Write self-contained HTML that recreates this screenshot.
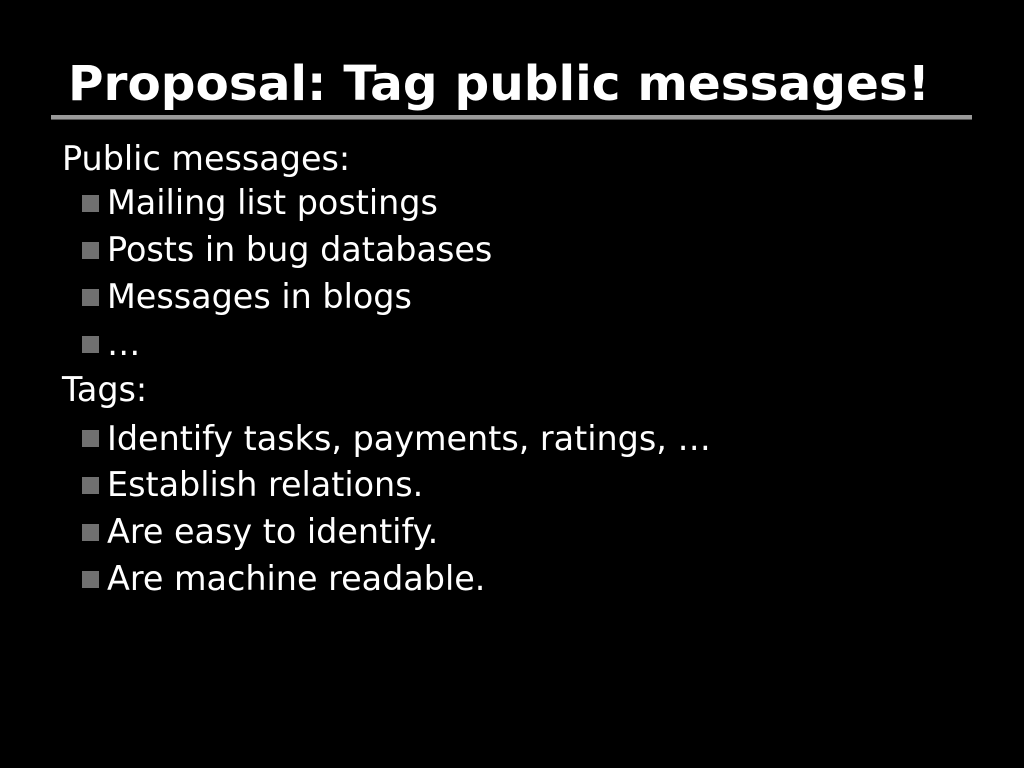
<!DOCTYPE html>
<html><head><meta charset="utf-8"><style>
body{margin:0;background:#000;width:1024px;height:768px;overflow:hidden;position:relative;font-family:"DejaVu Sans","Liberation Sans",sans-serif;color:#fff}
.t{position:absolute;left:68px;top:60px;font-size:48.5px;font-weight:bold;line-height:1;white-space:nowrap}
.rule{position:absolute;left:51px;top:115px;width:921px;height:4px;background:#9a9a9a;border-bottom:1px solid #555}
.l{position:absolute;font-size:33.4px;line-height:1;white-space:nowrap}
.b{left:107px}
.h{left:62px}
.sq{position:absolute;left:82px;width:17px;height:17px;background:#707070}
</style></head><body>
<div class="t">Proposal: Tag public messages!</div>
<div class="rule"></div>
<div class="l h" style="top:142px">Public messages:</div>
<div class="sq" style="top:195px"></div><div class="l b" style="top:186px">Mailing list postings</div>
<div class="sq" style="top:242px"></div><div class="l b" style="top:233px">Posts in bug databases</div>
<div class="sq" style="top:289px"></div><div class="l b" style="top:280px">Messages in blogs</div>
<div class="sq" style="top:336px"></div><div class="l b" style="top:327px">…</div>
<div class="l h" style="top:373px">Tags:</div>
<div class="sq" style="top:430px"></div><div class="l b" style="top:422px">Identify tasks, payments, ratings, …</div>
<div class="sq" style="top:477px"></div><div class="l b" style="top:468px">Establish relations.</div>
<div class="sq" style="top:524px"></div><div class="l b" style="top:515px">Are easy to identify.</div>
<div class="sq" style="top:571px"></div><div class="l b" style="top:562px">Are machine readable.</div>
</body></html>
